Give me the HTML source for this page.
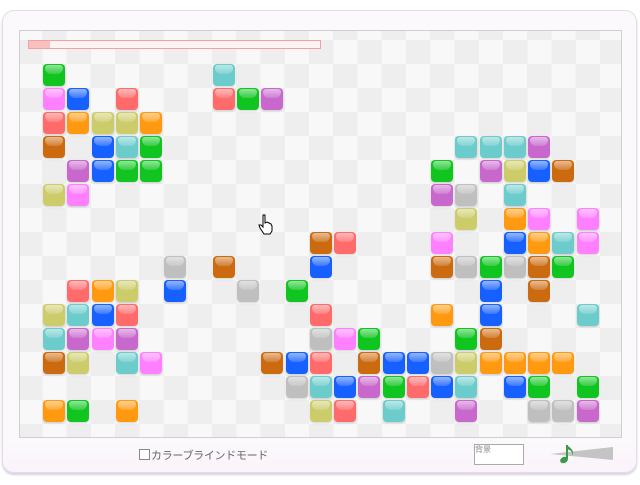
<!DOCTYPE html>
<html><head><meta charset="utf-8">
<style>
html,body{margin:0;padding:0;background:#fff;width:640px;height:485px;overflow:hidden;font-family:"Liberation Sans","Noto Sans CJK JP",sans-serif}
#frame{position:absolute;left:2px;top:10px;width:633px;height:461px;border:1px solid #e6dbe8;border-radius:12px;background:linear-gradient(to top,#fbf3fb 0,#fbf9fb 30px);box-shadow:0 2px 2px #d8cfe0}
#board{position:absolute;left:19px;top:30px;width:601px;height:406px;border:1px solid #cfcfcf;overflow:hidden;
background-color:#f8f8f8;
background-image:repeating-conic-gradient(#eeeeee 0 25%, #f8f8f8 0 50%);
background-size:48.5px 48px;background-position:-2px 33px}
.b{position:absolute;width:22px;height:22px;border-radius:4px;box-shadow:0 1px 2px rgba(0,0,0,.15)}
.b:after{content:"";position:absolute;left:2px;top:1px;right:2px;height:9px;border-radius:3px 3px 6px 6px;background:linear-gradient(rgba(255,255,255,.55),rgba(255,255,255,.15))}
#bar{position:absolute;left:28px;top:40px;width:291px;height:7px;border:1px solid #f4a0a0;background:#fdf3f3}
#bar i{position:absolute;left:0;top:0;width:21px;height:7px;background:#f9c0c0}
#cb{position:absolute;left:139px;top:447px;font-size:11px;color:#666;letter-spacing:-0.3px}
#cb span{display:inline-block;width:9px;height:9px;border:1px solid #888;vertical-align:-1px;margin-right:1px;background:#fff}
#bg{position:absolute;left:474px;top:444px;width:48px;height:19px;border:1px solid #aaa;background:#fff;font-size:8px;color:#888;line-height:10px}
</style></head><body>
<div id="frame"></div>
<div id="board"></div>
<div id="bar"><i></i></div>
<div id="cb"><span></span>カラーブラインドモード</div>
<div id="bg">背景</div>
<svg style="position:absolute;left:545px;top:442px" width="72" height="26">
<polygon points="5,12 68,5 68,18" fill="#c4c4c4"/>
<path d="M22,3 L22,17" stroke="#3a9a4a" stroke-width="2"/>
<ellipse cx="19" cy="18" rx="4" ry="3" fill="#3a9a4a" transform="rotate(-25 19 18)"/>
<path d="M22,3 C25,6 30,8 27,14 C28,9 25,8 22,7Z" fill="#3a9a4a"/>
</svg>
<svg style="position:absolute;left:258px;top:214px" width="16" height="22">
<path d="M5,1 L7,1 L7,9 L9,8 L11,9 L13,10 L14,12 L14,17 L12,20 L6,20 L2,14 L1,11 L3,11 L5,13 Z" fill="#fff" stroke="#000" stroke-width="1"/>
</svg>
<script>
var col={G:"#10c520",P:"#ff80ff",B:"#1560ff",R:"#ff6a6a",O:"#ff9a10",Y:"#cccc6a",C:"#6ccccc",N:"#cc6a10",V:"#c868cc",S:"#bfbfbf"};
var rows=[
"1G 8C",
"1P 2B 4R 8R 9G 10V",
"1R 2O 3Y 4Y 5O",
"1N 3B 4C 5G 18C 19C 20C 21V",
"2V 3B 4G 5G 17G 19V 20Y 21B 22N",
"1Y 2P 17V 18S 20C",
"18Y 20O 21P 23P",
"12N 13R 17P 20B 21O 22C 23P",
"6S 8N 12B 17N 18S 19G 20S 21N 22G",
"2R 3O 4Y 6B 9S 11G 19B 21N",
"1Y 2C 3B 4R 12R 17O 19B 23C",
"1C 2V 3P 4V 12S 13P 14G 18G 19N",
"1N 2Y 4C 5P 10N 11B 12R 14N 15B 16B 17S 18Y 19O 20O 21O 22O",
"11S 12C 13B 14V 15G 16R 17B 18C 20B 21G 23G",
"1O 2G 4O 12Y 13R 15C 18V 21S 22S 23V"];
var h="";
rows.forEach(function(r,ri){r.split(" ").forEach(function(t){
var c=parseInt(t),k=t.replace(/\d+/,"");
var x=Math.round(18.75+24.25*c)-20,y=64+24*ri-31;
h+='<div class="b" style="left:'+x+'px;top:'+y+'px;background:linear-gradient('+col[k]+','+col[k]+')"></div>';});});
document.getElementById("board").innerHTML=h;
</script>
</body></html>
